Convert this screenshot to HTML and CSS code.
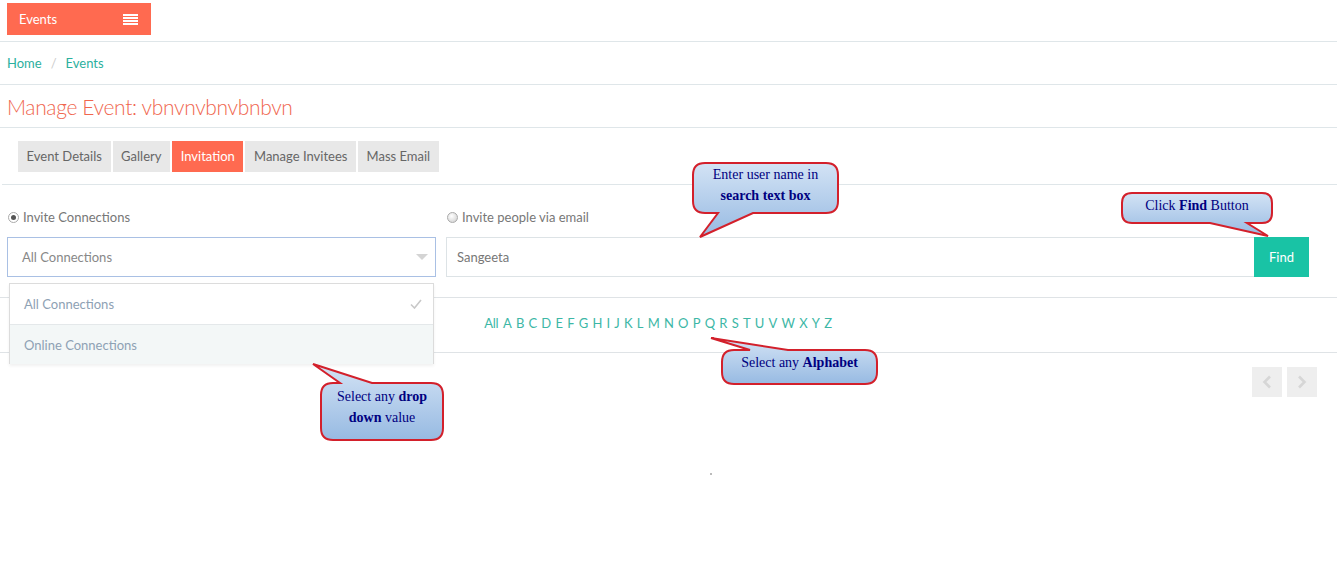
FILE: index.html
```html
<!DOCTYPE html>
<html lang="en">
<head>
  <meta charset="UTF-8" />
  <title>Manage Event</title>
  <link rel="stylesheet" href="styles.css">
</head>
<body>
  <!-- top bar -->
  <div class="topbar">
    <div class="brand">
      <span>Events</span>
      <span class="burger"><i></i><i></i><i></i><i></i></span>
    </div>
  </div>

  <div class="crumbs">
    <a>Home</a><span class="sep">/</span><a>Events</a>
  </div>

  <h1 class="title">Manage Event: vbnvnvbnvbnbvn</h1>

  <div class="tabs">
    <span class="tab">Event Details</span>
    <span class="tab">Gallery</span>
    <span class="tab active">Invitation</span>
    <span class="tab">Manage Invitees</span>
    <span class="tab">Mass Email</span>
  </div>

  <div class="form">
    <div class="col">
      <label class="radio"><span class="dot on"></span>Invite Connections</label>
      <div class="select">
        <span>All Connections</span>
        <span class="caret"></span>
        <ul class="dropdown">
          <li>All Connections
            <svg class="check" width="12" height="10" viewBox="0 0 12 10"><path d="M1 5.5 L4.5 9 L11 1" fill="none" stroke="#c8c8c8" stroke-width="1.6"/></svg>
          </li>
          <li class="hover">Online Connections</li>
        </ul>
      </div>
    </div>
    <div class="col">
      <label class="radio"><span class="dot"></span>Invite people via email</label>
      <div class="search">
        <input type="text" value="Sangeeta">
        <button class="find">Find</button>
      </div>
    </div>
  </div>

  <div class="letters">
    <a>All</a><a>A</a><a>B</a><a>C</a><a>D</a><a>E</a><a>F</a><a>G</a><a>H</a><a>I</a><a>J</a><a>K</a><a>L</a><a>M</a><a>N</a><a>O</a><a>P</a><a>Q</a><a>R</a><a>S</a><a>T</a><a>U</a><a>V</a><a>W</a><a>X</a><a>Y</a><a>Z</a>
  </div>

  <div class="pager">
    <span class="pg"><svg width="10" height="14" viewBox="0 0 10 14"><path d="M8 1.5 L2.5 7 L8 12.5" fill="none" stroke="#d6d6d6" stroke-width="2.6"/></svg></span>
    <span class="pg"><svg width="10" height="14" viewBox="0 0 10 14"><path d="M2 1.5 L7.5 7 L2 12.5" fill="none" stroke="#d6d6d6" stroke-width="2.6"/></svg></span>
  </div>

  <span class="spinner"></span>

  <!-- help callouts -->
  <div class="callout c-enter">
    <svg width="152" height="80">
      <defs><linearGradient id="g1" x1="0" y1="0" x2="0" y2="1"><stop offset="0" stop-color="#d3e3f5"/><stop offset="1" stop-color="#97bae2"/></linearGradient></defs>
      <path d="M15 3 H136 Q148 3 148 15 V41 Q148 53 136 53 H63 L10 77 L28 53 H15 Q3 53 3 41 V15 Q3 3 15 3 Z" fill="url(#g1)" stroke="#d3202b" stroke-width="2"/>
    </svg>
    <div class="callout-text">Enter user name in<br><b>search text box</b></div>
  </div>

  <div class="callout c-find">
    <svg width="158" height="50">
      <defs><linearGradient id="g2" x1="0" y1="0" x2="0" y2="1"><stop offset="0" stop-color="#d3e3f5"/><stop offset="1" stop-color="#97bae2"/></linearGradient></defs>
      <path d="M14 3 H144 Q154 3 154 13 V23 Q154 33 144 33 H129 L150 46 L92 33 H14 Q4 33 4 23 V13 Q4 3 14 3 Z" fill="url(#g2)" stroke="#d3202b" stroke-width="2"/>
    </svg>
    <div class="callout-text">Click <b>Find</b> Button</div>
  </div>

  <div class="callout c-alpha">
    <svg width="172" height="52">
      <defs><linearGradient id="g3" x1="0" y1="0" x2="0" y2="1"><stop offset="0" stop-color="#d3e3f5"/><stop offset="1" stop-color="#97bae2"/></linearGradient></defs>
      <path d="M26 15 H42 L3 3 L80 15 H157 Q169 15 169 27 V37 Q169 49 157 49 H26 Q14 49 14 37 V27 Q14 15 26 15 Z" fill="url(#g3)" stroke="#d3202b" stroke-width="2"/>
    </svg>
    <div class="callout-text">Select any <b>Alphabet</b></div>
  </div>

  <div class="callout c-drop">
    <svg width="138" height="82">
      <defs><linearGradient id="g4" x1="0" y1="0" x2="0" y2="1"><stop offset="0" stop-color="#d3e3f5"/><stop offset="1" stop-color="#97bae2"/></linearGradient></defs>
      <path d="M24 22 H31 L4 3 L63 22 H122 Q134 22 134 34 V67 Q134 79 122 79 H24 Q12 79 12 67 V34 Q12 22 24 22 Z" fill="url(#g4)" stroke="#d3202b" stroke-width="2"/>
    </svg>
    <div class="callout-text">Select any <b>drop</b><br><b>down</b> value</div>
  </div>
</body>
</html>
```

FILE: styles.css
```css
body {
  margin: 0;
  font-family: Lato, 'Open Sans', sans-serif;
  font-size: 13px;
  color: #777;
  background: #fff;
  position: relative;
  min-height: 573px;
}
a {
  color: #2bb09e;
  cursor: pointer;
}

/* header */
.topbar {
  height: 42px;
  box-sizing: border-box;
  padding: 3px 7px 0;
  border-bottom: 1px solid #dfe6e9;
}
.brand {
  width: 144px;
  height: 32px;
  background: #ff6a50;
  color: #fff;
  display: flex;
  align-items: center;
  justify-content: space-between;
  padding: 0 13px 0 12px;
  box-sizing: border-box;
  font-size: 13px;
}
.burger {
  display: flex;
  flex-direction: column;
  gap: 1px;
  width: 15px;
}
.burger i {
  display: block;
  height: 2px;
  background: #fff;
}

.crumbs {
  height: 43px;
  box-sizing: border-box;
  border-bottom: 1px solid #dfe6e9;
  display: flex;
  align-items: center;
  padding-left: 7px;
}
.crumbs .sep {
  color: #ccc;
  padding: 0 9px 0 9px;
}

.title {
  margin: 0;
  height: 43px;
  box-sizing: border-box;
  border-bottom: 1px solid #dfe6e9;
  display: flex;
  align-items: center;
  padding-left: 7px;
  font-size: 21px;
  font-weight: 300;
  color: #f0664e;
  letter-spacing: -0.35px;
}

.tabs {
  height: 57px;
  box-sizing: border-box;
  margin-left: 2px;
  padding: 13px 0 0 16px;
  border-bottom: 1px solid #dfe6e9;
  display: flex;
  gap: 2px;
  align-items: flex-start;
}
.tab {
  height: 31px;
  line-height: 31px;
  padding: 0 8.6px;
  background: #e8e8e8;
  color: #666;
}
.tab.active {
  background: #ff6a50;
  color: #fff;
}

/* invite form */
.form {
  display: grid;
  grid-template-columns: 429px 1fr;
  gap: 10px;
  padding: 22px 28px 0 7px;
}
.radio {
  display: flex;
  align-items: center;
  height: 20px;
  margin-bottom: 10px;
}
.dot {
  width: 11px;
  height: 11px;
  border-radius: 50%;
  box-sizing: border-box;
  border: 1px solid #aaa;
  background: radial-gradient(circle at 40% 35%, #fff, #ccc);
  margin: 0 4px 0 1px;
  position: relative;
}
.dot.on {
  background: #fff;
}
.dot.on::after {
  content: "";
  position: absolute;
  left: 2px;
  top: 2px;
  width: 5px;
  height: 5px;
  border-radius: 50%;
  background: #555;
}
.select {
  position: relative;
  height: 40px;
  box-sizing: border-box;
  border: 1px solid #a9c0e4;
  display: flex;
  align-items: center;
  justify-content: space-between;
  padding: 0 7px 0 14px;
  color: #888;
}
.caret {
  width: 0;
  height: 0;
  border-left: 6px solid transparent;
  border-right: 6px solid transparent;
  border-top: 6px solid #d4d4d4;
}
.dropdown {
  position: absolute;
  left: 1px;
  right: 1px;
  top: 45px;
  margin: 0;
  padding: 0;
  list-style: none;
  background: #fff;
  border: 1px solid #dcdcdc;
  border-bottom: none;
  z-index: 5;
  box-shadow: 0 2px 3px rgba(0, 0, 0, 0.06);
}
.dropdown li {
  height: 40px;
  display: flex;
  align-items: center;
  justify-content: space-between;
  padding: 0 11px 0 14px;
  color: #8ea1b4;
}
.dropdown li.hover {
  background: #f3f7f7;
  border-top: 1px solid #e4e8ea;
  height: 39px;
}

.search {
  display: flex;
  height: 40px;
}
.search input {
  flex: 1;
  border: 1px solid #dde3e6;
  border-right: none;
  padding: 0 10px;
  font-family: inherit;
  font-size: 13px;
  color: #777;
  outline: none;
}
.find {
  width: 55px;
  border: none;
  background: #19c3a5;
  color: #fff;
  font-family: inherit;
  font-size: 13px;
}

/* alphabet filter */
.letters {
  margin-top: 20px;
  height: 56px;
  box-sizing: border-box;
  border-top: 1px solid #dfe3e6;
  border-bottom: 1px solid #dfe3e6;
  display: flex;
  align-items: center;
  justify-content: center;
  gap: 4.4px;
  padding: 0 28px 4px 7px;
  letter-spacing: -0.2px;
}
.letters a {
  color: #3db7a6;
}

.pager {
  display: flex;
  justify-content: flex-end;
  gap: 5px;
  padding: 14px 20px 0 0;
}
.pg {
  width: 30px;
  height: 30px;
  background: #eee;
  display: flex;
  align-items: center;
  justify-content: center;
}

.spinner {
  position: absolute;
  left: 710px;
  top: 473px;
  width: 2px;
  height: 2px;
  background: #bbb;
}

/* help callouts drawn over the screenshot */
.callout {
  position: absolute;
  z-index: 20;
  font-family: 'Liberation Serif', 'Times New Roman', serif;
  font-size: 14px;
  color: #000080;
}
.callout svg {
  position: absolute;
  left: 0;
  top: 0;
}
.callout-text {
  position: absolute;
  text-align: center;
  line-height: 21px;
}
.c-enter {
  left: 690px;
  top: 160px;
  width: 152px;
  height: 80px;
}
.c-enter .callout-text {
  left: 3px;
  width: 145px;
  top: 4px;
}
.c-find {
  left: 1118px;
  top: 190px;
  width: 158px;
  height: 50px;
}
.c-find .callout-text {
  left: 4px;
  width: 150px;
  top: 5px;
}
.c-alpha {
  left: 708px;
  top: 335px;
  width: 172px;
  height: 52px;
}
.c-alpha .callout-text {
  left: 14px;
  width: 155px;
  top: 17px;
}
.c-drop {
  left: 309px;
  top: 361px;
  width: 138px;
  height: 82px;
}
.c-drop .callout-text {
  left: 12px;
  width: 122px;
  top: 25px;
}
```
